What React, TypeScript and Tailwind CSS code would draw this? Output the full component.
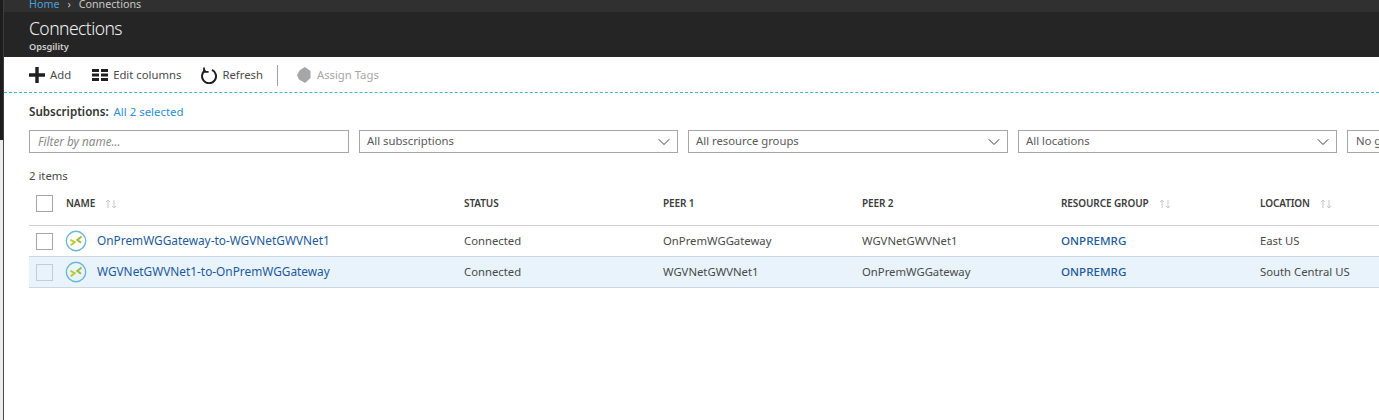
import { ChevronDown } from "lucide-react";

const rows = [
  { name: "OnPremWGGateway-to-WGVNetGWVNet1", peer1: "OnPremWGGateway", peer2: "WGVNetGWVNet1", location: "East US", selected: false },
  { name: "WGVNetGWVNet1-to-OnPremWGGateway", peer1: "WGVNetGWVNet1", peer2: "OnPremWGGateway", location: "South Central US", selected: true },
];

const SortArrows = () => (
  <svg width="14" height="10" viewBox="0 0 14 10" className="ml-[9px] text-[#c8c8c8]" fill="none" stroke="currentColor" strokeWidth="1">
    <path d="M4 9V1M2 3l2-2 2 2" />
    <path d="M10 1v8M8 7l2 2 2-2" />
  </svg>
);

const ConnectionIcon = () => (
  <svg width="22" height="22" viewBox="0 0 22 22" fill="none" className="shrink-0 -ml-[1px]">
    <circle cx="11" cy="11" r="9.7" stroke="#6db7d8" strokeWidth="1.4" />
    <path d="M5.5 9.8l4.2 2.4-4 3" stroke="#b5cc2e" strokeWidth="1.9" />
    <path d="M16.5 6.5l-4.2 3.4 3.7 2.8" stroke="#9dbb35" strokeWidth="1.9" />
  </svg>
);

const Checkbox = ({ muted }: { muted?: boolean }) => (
  <div className={`w-[17px] h-[17px] shrink-0 border ${muted ? "border-[#c8ccce]" : "border-[#a6a6a6]"}`} />
);

const Select = ({ label, w }: { label: string; w: string }) => (
  <div className={`${w} h-[23px] shrink-0 border border-[#a6a6a6] flex items-center justify-between pl-[7px] pr-[3px]`}>
    <span className="text-[#595959] text-[11.3px] pb-[1px]">{label}</span>
    <ChevronDown className="w-[20px] h-[20px] text-[#404040]" strokeWidth={1.2} />
  </div>
);

const Head = ({ label, w, sort }: { label: string; w: string; sort?: boolean }) => (
  <div className={`${w} shrink-0 flex items-center text-[10px] tracking-[-0.1px] font-semibold text-[#3c3c3c]`}>
    {label}
    {sort && <SortArrows />}
  </div>
);

export default function App() {
  return (
    <div className="w-[1379px] h-[420px] overflow-hidden bg-white text-[11.3px] flex" style={{ fontFamily: '"Noto Sans", sans-serif' }}>
      <div className="w-[4px] shrink-0 flex flex-col">
        <div className="h-[140px] bg-[#1d1d1d] border-r border-[#3c3c3c]" />
        <div className="flex-1 bg-[#ececec] border-r border-[#4a4a4a]" />
      </div>
      <div className="flex-1 min-w-0 flex flex-col">
        <div className="h-[57px] bg-[#252525] shrink-0 flex flex-col">
          <div className="h-[12px] bg-[#303030] pl-[25px] flex items-end text-[10.7px] leading-[14px] pb-[1px] text-[#c8c8c8]">
            <span className="text-[#4aa0dc]">Home</span>
            <span className="mx-[8px]">›</span>
            <span>Connections</span>
          </div>
          <div className="pl-[25px] pt-[5px] text-[17.5px] leading-[22px] font-light text-[#f2f2f2] tracking-[-0.55px]">Connections</div>
          <div className="pl-[25px] text-[9.2px] leading-[13px] mt-[1px] font-semibold text-[#cfcfcf]">Opsgility</div>
        </div>

        <div className="h-[36px] shrink-0 flex items-center pl-[25px] pt-[1px] text-[#4a4a4a] border-b border-dashed border-[#3fb8c4]">
          <svg width="16" height="16" viewBox="0 0 16 16" className="text-[#1f1f1f]" fill="currentColor">
            <path d="M6.3 0h3.4v6.3H16v3.4H9.7V16H6.3V9.7H0V6.3h6.3z" />
          </svg>
          <span className="ml-[5px]">Add</span>
          <svg width="16" height="12" viewBox="0 0 16 12" className="ml-[21px] text-[#1f1f1f]" fill="currentColor">
            <path d="M0 0h7v3H0zM9 0h7v3H9zM0 4.5h7v3H0zM9 4.5h7v3H9zM0 9h7v3H0zM9 9h7v3H9z" />
          </svg>
          <span className="ml-[5px]">Edit columns</span>
          <svg width="16" height="17" viewBox="0 0 16 17" className="ml-[20px] text-[#1f1f1f]" fill="none" stroke="currentColor" strokeWidth="2">
            <path d="M4.5 3.2A7 7 0 1 0 11 2.9" />
            <path d="M3 0.5v4.3h4.6" strokeWidth="1.8" />
          </svg>
          <span className="ml-[5px]">Refresh</span>
          <div className="ml-[14px] w-[1px] h-[21px] bg-[#a0a0a0]" />
          <svg width="16" height="16" viewBox="0 0 16 16" className="ml-[18px] text-[#a6a6a6]" fill="currentColor">
            <path d="M9 0l5.5 4v7L9 16 3 12.5 1 8l3-5z" />
          </svg>
          <span className="ml-[5px] text-[#a6a6a6]">Assign Tags</span>
        </div>

        <div className="pl-[25px]">
          <div className="h-[37px] flex items-center pt-[1px] text-[11.4px]">
            <span className="font-semibold text-[#333333] text-[11.6px]">Subscriptions:</span>
            <span className="ml-[5px] text-[#2a8fd6]">All 2 selected</span>
          </div>

          <div className="flex gap-[10px] h-[23px]">
            <div className="w-[320px] h-[23px] shrink-0 border border-[#a6a6a6] flex items-center pl-2 italic text-[11.7px] text-[#8a8a8a]">Filter by name...</div>
            <Select label="All subscriptions" w="w-[319px]" />
            <Select label="All resource groups" w="w-[320px]" />
            <Select label="All locations" w="w-[319px]" />
            <div className="w-[100px] h-[23px] shrink-0 border border-[#a6a6a6] flex items-center pl-2 text-[#595959]">No grouping</div>
          </div>

          <div className="mt-[15px] h-[17px] flex items-center text-[#4a4a4a]">2 items</div>

          <div className="mt-[3px] h-[38px] flex items-center pb-[6px] border-b border-[#d0d0d0]">
            <div className="w-[37px] shrink-0 pl-[7px]">
              <Checkbox />
            </div>
            <Head label="NAME" w="w-[398px]" sort />
            <Head label="STATUS" w="w-[199px]" />
            <Head label="PEER 1" w="w-[199px]" />
            <Head label="PEER 2" w="w-[199px]" />
            <Head label="RESOURCE GROUP" w="w-[199px]" sort />
            <Head label="LOCATION" w="w-[120px]" sort />
          </div>

          {rows.map((r) => (
            <div
              key={r.name}
              className={`h-[31px] flex items-center border-b border-[#cfd6dc] ${r.selected ? "bg-[#e9f3fb]" : ""}`}
            >
              <div className="w-[37px] shrink-0 pl-[7px]">
                <Checkbox muted={r.selected} />
              </div>
              <div className="w-[398px] shrink-0 flex items-center">
                <ConnectionIcon />
                <span className="ml-[10px] text-[#1b5a9c] text-[11.85px] pb-[1px]">{r.name}</span>
              </div>
              <div className="w-[199px] shrink-0 text-[#4a4a4a]">Connected</div>
              <div className="w-[199px] shrink-0 text-[#4a4a4a]">{r.peer1}</div>
              <div className="w-[199px] shrink-0 text-[#4a4a4a]">{r.peer2}</div>
              <div className="w-[199px] shrink-0 text-[#1b5a9c] text-[11.6px] font-medium">ONPREMRG</div>
              <div className="w-[120px] shrink-0 text-[#4a4a4a]">{r.location}</div>
            </div>
          ))}
        </div>
      </div>
    </div>
  );
}
